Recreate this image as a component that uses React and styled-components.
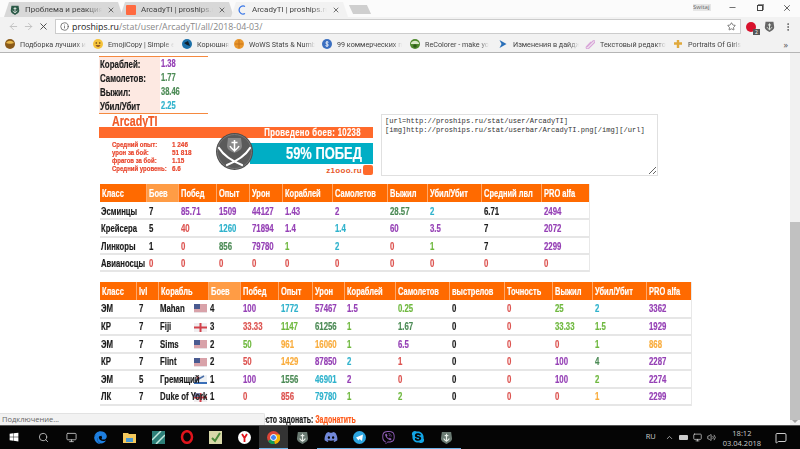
import React from 'react';
import styled, { createGlobalStyle } from 'styled-components';
import { FaWindows, FaEdge, FaViber, FaSkype, FaDiscord } from 'react-icons/fa';
import { ArrowLeft, ArrowRight, X, Info, Star, Minus, Search, ChevronUp, MessageSquare, Volume2, Monitor, MoreVertical } from 'lucide-react';

const Global = createGlobalStyle`
  html, body { margin: 0; padding: 0; width: 800px; height: 449px; overflow: hidden; background: #fff; }
  * { box-sizing: border-box; }
`;
const UI = `"Open Sans", "Noto Sans", sans-serif`;
const SMALL = `Roboto, "Noto Sans", sans-serif`;
const BOLD = `"Liberation Sans", Arial, sans-serif`;
const COLORS = { p: '#9540b5', r: '#dc5350', t: '#2fb2cc', g: '#55a84f', d: '#4b8a55', l: '#6fb83f', o: '#f9ac3c', k: '#1c1c1c' };

const Squeeze = styled.span`
  display: inline-block; white-space: nowrap; transform: scaleX(${p => p.$x ?? 0.71}); transform-origin: ${p => p.$o ?? 'left'} center;
  -webkit-text-stroke: .2px currentColor;
`;
const Window = styled.div`width: 800px; height: 449px; display: flex; flex-direction: column; overflow: hidden; font-family: ${UI};`;
const TabStrip = styled.div`height: 17px; background: #fbfbfb; display: flex; align-items: flex-end; padding-left: 4px; flex: none;`;
const Tab = styled.div`
  width: ${p => p.$w}px; height: 15px; margin-right: -3px; padding: 0 8px 0 6px; display: flex; align-items: center; gap: 5px;
  background: ${p => p.$active ? '#f2f2f2' : '#d8d8d8'}; color: #444; font: 400 8px ${SMALL}; white-space: nowrap;
  clip-path: polygon(0 100%, 5px 0, calc(100% - 5px) 0, 100% 100%);
`;
const TabTitle = styled.span`flex: 1; overflow: hidden; -webkit-mask-image: linear-gradient(90deg,#000 80%,transparent);`;
const NewTab = styled.div`width: 18px; height: 9px; margin: 0 0 3px 6px; background: #cfcfcf; transform: skewX(25deg);`;
const Controls = styled.div`margin-left: auto; display: flex; align-items: center; height: 17px; color: #444; padding-bottom: 2px;`;
const User = styled.span`font-size: 6px; width: 18px; color: #666; background: #e6e6e6; height: 7px; line-height: 7px; margin-right: 8px; overflow: hidden;`;
const Ctl = styled.span`width: 27px; display: flex; justify-content: center; align-items: center;`;
const Restore = styled.span`width: 6px; height: 6px; border: 1px solid #444; box-shadow: 1px -1px 0 0 #888;`;
const Toolbar = styled.div`height: 19px; background: #f2f2f2; display: flex; align-items: center; padding-left: 6px; flex: none; color: #555;`;
const NavBtn = styled.span`width: 15px; display: flex; justify-content: center; color: ${p => p.$on ? '#444' : '#c0c0c0'};`;
const Omni = styled.div`
  width: 686px; height: 15px; margin-left: 4px; background: #fff; border: 1px solid #ccc; display: flex; align-items: center; gap: 3px;
  padding: 0 4px; font-size: 8.8px; color: #888; white-space: nowrap;
`;
const Host = styled.span`color: #222;`;
const Path = styled.span`margin-left: -3px;`;
const OmniStar = styled.span`margin-left: auto; display: flex; color: #555;`;
const Ext = styled.div`display: flex; align-items: center; gap: 8px; margin-left: 5px;`;
const AdBadge = styled.span`position: relative; width: 10px; height: 10px; border-radius: 50%; background: #d8112c; display: block;`;
const AdCount = styled.span`position: absolute; right: -4px; bottom: -3px; width: 7px; height: 6px; background: #555; color: #fff; font-size: 5px; line-height: 6px; text-align: center;`;
const Bookmarks = styled.div`height: 17px; background: #f2f2f2; border-bottom: 1px solid #b5b5b5; display: flex; align-items: center; padding-left: 5px; flex: none; position: relative;`;
const Mark = styled.div`width: ${p => p.$w}px; display: flex; align-items: center; font: 400 7.2px ${SMALL}; color: #444; white-space: nowrap;`;
const MarkIconSvg = styled.svg`width: 10px; height: 10px; flex: none;`;
const TabFavicon = styled.span`width: 10px; height: 10px; flex: none; border-radius: 1px; background: #ff6a40;`;
const MarkText = styled.span`display: block; margin-left: 5px; max-width: 66px; overflow: hidden; -webkit-mask-image: linear-gradient(90deg,#000 85%,transparent);`;
const More = styled.span`position: absolute; right: 12px; top: 2px; font-size: 9px; color: #555;`;

const Body = styled.div`flex: 1; min-height: 0; display: flex; background: #fff;`;
const Content = styled.div`flex: 1; position: relative; overflow: hidden; padding: 3px 0 0 99px; font-family: ${BOLD}; font-weight: 700; font-size: 10px; color: #1c1c1c;`;
const Scrollbar = styled.div`
  width: 10px; background: #f1f1f1; display: flex; flex-direction: column; justify-content: flex-end; align-items: center;
  &::after { content: ''; width: 0; height: 0; margin-bottom: 2px; border: 3px solid transparent; border-top: 3px solid #a0a0a0; border-bottom: 0; }
`;
const Thumb = styled.div`height: 198px; width: 10px; background: #c1c1c1;`;
const Summary = styled.div`width: 109px; border-top: 1px solid #f5893f; border-bottom: 1px solid #f5893f;`;
const SummaryRow = styled.div`display: flex; height: 14px; line-height: 14px;`;
const SummaryLabel = styled.span`width: 61px; background: #fde9e2; font-size: 11px; padding-left: 1px;`;
const SummaryValue = styled.span`padding-left: 1px; color: ${p => COLORS[p.$c]};`;
const Profile = styled.div`display: flex; gap: 8px; align-items: flex-end;`;
const Userbar = styled.div`width: 274px;`;
const Nick = styled.div`height: 13px; padding-left: 13px; color: #ef5a26; font-size: 15px; line-height: 13px;`;
const Banner = styled.div`height: 49px; position: relative;`;
const BannerTop = styled.div`height: 11px; background: #ff6a2b; color: #fff; text-align: right; padding-right: 12px; line-height: 11px; font-size: 11px; letter-spacing: .5px;`;
const BannerBody = styled.div`display: flex; justify-content: space-between; padding-top: 5px;`;
const Facts = styled.div`padding: 0 0 0 13px; color: #e8452c; font-size: 7.5px; line-height: 8px; margin-top: -2px;`;
const Fact = styled.div`display: flex;`;
const FactLabel = styled.span`width: 60px;`;
const Promo = styled.div`width: 123px;`;
const WinBox = styled.div`height: 21px; background: #00aec5; color: #fff; font-size: 17px; line-height: 21px; text-align: right; padding-right: 11px;`;
const Site = styled.div`display: flex; justify-content: flex-end; align-items: center; gap: 1px; color: #e85a2c; font-size: 8px; letter-spacing: .3px; height: 12px;`;
const SiteIcon = styled.span`width: 10px; height: 10px; background: #ff6a2b; border-radius: 2px;`;
const Emblem = styled.svg`position: absolute; left: 117px; top: 6px;`;
const Code = styled.textarea`
  width: 277px; height: 62px; margin: 0; padding: 2px 3px; border: 1px solid #e0e0e0; font: 400 7.1px/9px "Liberation Mono", monospace; color: #333; overflow: hidden; outline: none; resize: both;
`;
const Table = styled.table`
  table-layout: fixed; border-collapse: collapse; width: ${p => p.$w}px; margin: ${p => p.$mt}px 0 0 1px; box-shadow: 1px 0 0 #e8e8e8;
  td { padding-top: ${p => p.$drop ?? 0}px; }
`;
const Th = styled.th`
  height: ${p => p.$h}px; padding: 0 0 0 2px; background: ${p => p.$hl ? '#ff9c45' : '#ff6a00'}; color: #fff; text-align: left; font-size: 11px; font-weight: 700; white-space: nowrap;
  border-left: 1px solid #ffa86a; &:first-child { border-left: 0; }
`;
const Td = styled.td`
  height: ${p => p.$h}px; padding: 0 0 0 ${p => p.$pl ?? 2.5}px; color: ${p => COLORS[p.$c] || '#1c1c1c'}; font-size: 11px; border-bottom: 2px solid #e6e6e6; white-space: nowrap; position: relative;
`;
const Flag = styled.svg`position: absolute; right: 1px; top: 4px;`;
const Donate = styled.div`margin: 8px 0 0 157px; font-size: 10px; line-height: 12px; white-space: nowrap;`;
const DonateLink = styled.span`color: #ff5a1a;`;
const StatusBubble = styled.div`position: absolute; left: 0; bottom: 0; width: 265px; height: 12px; background: #f2f2f2; border-top: 1px solid #e2e2e2; border-right: 1px solid #e2e2e2; border-radius: 0 2px 0 0; font: 400 7.5px/11px ${UI}; color: #666; padding-left: 2px;`;
const Taskbar = styled.div`height: 24px; flex: none; background: #050505; border-top: 1px solid #555; display: flex; align-items: center; color: #ddd;`;
const Slot = styled.div`
  width: 28.8px; height: 23px; display: flex; align-items: center; justify-content: center; flex: none;
  background: ${p => p.$active ? '#333' : 'transparent'}; border-bottom: 1px solid ${p => p.$open ? '#6fb4e8' : 'transparent'};
`;
const Tray = styled.div`margin-left: auto; display: flex; align-items: center; gap: 5px; font-size: 7.5px; color: #ccc; padding-right: 13px;`;
const Clock = styled.div`text-align: center; line-height: 10px; font-size: 7.5px; margin: 0 9px 0 2px;`;
const Lang = styled.span`margin-right: 4px; margin-top: -3px;`;
const Battery = styled.span`width: 9px; height: 5px; background: #ccc; border-radius: 1px;`;

const Shield = ({ size = 14, c = '#6a7a72', a = '#e8eee8' }) => (
  <svg width={size} height={size} viewBox="0 0 14 14"><path d="M2 1h10l1 7c0 3-3 4-6 6-3-2-6-3-6-6z" fill={c} /><path d="M7 3v8M5 5h4M4 8c1 2 2 2 3 3 1-1 2-1 3-3" stroke={a} strokeWidth="1.2" fill="none" /></svg>
);
const UsFlag = () => (
  <Flag width="13" height="9" viewBox="0 0 13 9"><rect width="13" height="9" fill="#e8e0e4" /><path d="M0 1h13M0 3h13M0 5h13M0 7h13" stroke="#c9646e" strokeWidth="1" /><rect width="6" height="5" fill="#4a5a90" /></Flag>
);
const UkFlag = ({ ensign }) => (
  <Flag width="13" height="9" viewBox="0 0 13 9"><rect width="13" height="9" fill="#f0eef0" /><path d="M6.5 0v9M0 4.5h13" stroke="#d2404a" strokeWidth="2" />{ensign && <rect width="6" height="4" fill="#7b7fa8" />}</Flag>
);
const SuFlag = () => (
  <Flag width="13" height="9" viewBox="0 0 13 9"><rect width="13" height="9" fill="#eef1f4" /><rect y="7" width="13" height="2" fill="#3a6fb8" /><path d="M1 6l9-5" stroke="#4a6fa8" strokeWidth="1.5" /><circle cx="4" cy="3" r="1.4" fill="#c45" /></Flag>
);
const flags = { us: <UsFlag />, uk: <UkFlag />, en: <UkFlag ensign />, su: <SuFlag /> };

const T1_COLS = [46, 32, 38, 33, 33, 50, 55, 40, 54, 60, 48];
const T1_HEAD = ['Класс', 'Боев', 'Побед', 'Опыт', 'Урон', 'Кораблей', 'Самолетов', 'Выжил', 'Убил/Убит', 'Средний лвл', 'PRO alfa'];
const T1 = [
  ['Эсминцы', '7 k', '85.71 p', '1509 p', '44127 p', '1.43 p', '2 p', '28.57 d', '2 t', '6.71 k', '2494 p'],
  ['Крейсера', '5 k', '40 r', '1260 t', '71894 p', '1.4 p', '1.4 t', '60 p', '3.5 p', '7 k', '2072 p'],
  ['Линкоры', '1 k', '0 r', '856 d', '79780 p', '1 l', '2 t', '0 r', '1 l', '7 k', '2299 p'],
  ['Авианосцы', '0 r', '0 r', '0 r', '0 r', '0 r', '0 r', '0 r', '0 r', '0 r', '0 r'],
];
const T2_COLS = [36, 22, 50, 32, 38, 34, 32, 51, 54, 55, 48, 40, 54, 45];
const T2_HEAD = ['Класс', 'lvl', 'Корабль', 'Боев', 'Побед', 'Опыт', 'Урон', 'Кораблей', 'Самолетов', 'выстрелов', 'Точность', 'Выжил', 'Убил/Убит', 'PRO alfa'];
const T2 = [
  ['ЭМ', '7', 'Mahan', 'us', '4', '100 p', '1772 t', '57467 p', '1.5 p', '0.25 l', '0 k', '0 r', '25 l', '2 t', '3362 p'],
  ['КР', '7', 'Fiji', 'uk', '3', '33.33 r', '1147 l', '61256 d', '1 l', '1.67 d', '0 k', '0 r', '33.33 l', '1.5 l', '1929 p'],
  ['ЭМ', '7', 'Sims', 'us', '2', '50 l', '961 o', '16060 o', '1 l', '6.5 p', '0 k', '0 r', '0 r', '1 l', '868 o'],
  ['КР', '7', 'Flint', 'us', '2', '50 r', '1429 o', '87850 p', '2 t', '1 r', '0 k', '0 r', '100 p', '4 d', '2287 p'],
  ['ЭМ', '5', 'Гремящий', 'su', '1', '100 p', '1556 d', '46901 t', '2 p', '0 r', '0 k', '0 r', '100 p', '2 l', '2274 p'],
  ['ЛК', '7', 'Duke of York', 'en', '1', '0 r', '856 r', '79780 t', '1 l', '2 l', '0 k', '0 r', '0 r', '1 o', '2299 p'],
];
const Cell = ({ v, h }) => { const [t, c] = v.split(' '); return <Td $h={h} $c={c}><Squeeze>{t}</Squeeze></Td>; };

const MARK_ICONS = [
  <><circle cx="5" cy="5" r="5" fill="#8a5a1a" /><path d="M1 4c2-3 6-3 8 0-2 1-6 1-8 0z" fill="#e8b84a" /></>,
  <><circle cx="5" cy="5" r="5" fill="#f5c33b" /><circle cx="3.300" cy="4" r=".8" fill="#5a3a10" /><circle cx="6.700" cy="4" r=".8" fill="#5a3a10" /><path d="M2.500 6.200c1.500 2 3.500 2 5 0z" fill="#7a3a20" /></>,
  <><circle cx="5" cy="5" r="5" fill="#1b6fa8" /><path d="M2 4l4-2 2 5-3-1z" fill="#12202c" /></>,
  <><circle cx="5" cy="5" r="5" fill="#e8962c" /><path d="M1 5h8M5 1v8" stroke="#c8741a" strokeWidth="1" /></>,
  <><circle cx="5" cy="5" r="5" fill="#3b6fc0" /><path d="M6.500 3.300C5.500 2.500 3.600 2.900 3.800 4.100 4 5.200 6.300 4.800 6.400 6c.1 1.200-2 1.400-3 .6M5 2v6" stroke="#fff" strokeWidth=".8" fill="none" /></>,
  <><circle cx="5" cy="5" r="5" fill="#4f8a2e" /><path d="M1 4c2-3 6-3 8 0v1H1z" fill="#d9e8c8" /><circle cx="5" cy="7" r="1.800" fill="#2f5a1a" /></>,
  <path d="M1.500 1l7 4-7 4 2-4z" fill="#2a6fb8" />,
  <path d="M2 8l6-6c1.500-1 2.500 .5 1.500 1.500L3.500 9.500C2 10.500 .5 9 1.500 7.500L6 3" fill="none" stroke="#d9a6d9" strokeWidth="1.100" />,
  <path d="M5 1v8M1 4.500h8" stroke="#e0a93c" strokeWidth="2.400" />,
];
const MARKS = [
  [88, 'Подборка лучших и'], [89, 'EmojiCopy | Simple e'], [52, 'Корюшня'], [88, 'WoWS Stats & Numb'],
  [88, '99 коммерческих п'], [88, 'ReColorer - make yo'], [87, 'Изменения в дайдж'], [88, 'Текстовый редактор'], [88, 'Portraits Of Girls'],
];
const SUMMARY = [['Кораблей:', '1.38', 'p'], ['Самолетов:', '1.77', 'd'], ['Выжил:', '38.46', 'd'], ['Убил/Убит', '2.25', 't']];
const FACTS = [['Средний опыт:', '1 246'], ['урон за бой:', '51 818'], ['фрагов за бой:', '1.15'], ['Средний уровень:', '6.6']];

const Emb = () => (
  <Emblem width="37" height="37" viewBox="0 0 37 37">
    <circle cx="18.5" cy="18.5" r="18.5" fill="#4d4d4d" />
    <circle cx="18.5" cy="18.5" r="17" fill="#5a5a5a" stroke="#777" strokeWidth="1" />
    <path d="M12 5h13l1 8c0 4-4 5-7.500 7-3.500-2-7.500-3-7.500-7z" fill="#888" />
    <path d="M18.500 7v11M15.500 9.500h6M14 13c1 2 2.500 3 4.500 5 2-2 3.500-3 4.500-5" stroke="#fff" strokeWidth="1.500" fill="none" />
    <path d="M3 15c5 8 13 13 23 17M34 15c-5 8-13 13-23 17" stroke="#fff" strokeWidth="2.200" fill="none" strokeLinecap="round" />
  </Emblem>
);

export default function App() {
  return (
    <Window>
      <Global />
      <TabStrip>
        <Tab $w={119}><Shield size={10} c="#2c5a48" /><TabTitle>Проблема и реакция на</TabTitle><X size={8} color="#333" /></Tab>
        <Tab $w={114}><TabFavicon /><TabTitle>ArcadyTI | proships.ru ста</TabTitle><X size={8} color="#333" /></Tab>
        <Tab $w={117} $active><svg width="10" height="10" viewBox="0 0 10 10" style={{ flex: 'none' }}><path d="M8 1.500A4 4 0 1 0 8 8.500" fill="none" stroke="#3b78e7" strokeWidth="1.300" /></svg><TabTitle>ArcadyTI | proships.ru ста</TabTitle><X size={8} color="#333" /></Tab>
        <NewTab />
        <Controls>
          <User>Switaj</User>
          <Ctl><Minus size={9} /></Ctl>
          <Ctl><Restore /></Ctl>
          <Ctl><X size={10} /></Ctl>
        </Controls>
      </TabStrip>
      <Toolbar>
        <NavBtn><ArrowLeft size={11} /></NavBtn>
        <NavBtn><ArrowRight size={11} /></NavBtn>
        <NavBtn $on><X size={11} /></NavBtn>
        <Omni>
          <Info size={9} color="#555" />
          <Host>proships.ru</Host><Path>/stat/user/ArcadyTI/all/2018-04-03/</Path>
          <OmniStar><Star size={9} /></OmniStar>
        </Omni>
        <Ext>
          <AdBadge><AdCount>2</AdCount></AdBadge>
          <Shield size={11} c="#666" />
          <MoreVertical size={10} color="#555" />
        </Ext>
      </Toolbar>
      <Bookmarks>
        {MARKS.map(([w, t], i) => <Mark key={t} $w={w}><MarkIconSvg viewBox="0 0 10 10">{MARK_ICONS[i]}</MarkIconSvg><MarkText>{t}</MarkText></Mark>)}
        <More>»</More>
      </Bookmarks>
      <Body>
        <Content>
          <Summary>
            {SUMMARY.map(([l, v, c]) => (
              <SummaryRow key={l}><SummaryLabel><Squeeze $x={0.72}>{l}</Squeeze></SummaryLabel><SummaryValue $c={c}><Squeeze $x={0.75}>{v}</Squeeze></SummaryValue></SummaryRow>
            ))}
          </Summary>
          <Profile>
            <Userbar>
              <Nick><Squeeze $x={0.71}>ArcadyTI</Squeeze></Nick>
              <Banner>
                <BannerTop><Squeeze $x={0.7} $o="right">Проведено боев: 10238</Squeeze></BannerTop>
                <BannerBody>
                  <Facts>
                    {FACTS.map(([l, v]) => <Fact key={l}><FactLabel><Squeeze $x={0.8}>{l}</Squeeze></FactLabel><Squeeze $x={0.85}>{v}</Squeeze></Fact>)}
                  </Facts>
                  <Promo>
                    <WinBox><Squeeze $x={0.76} $o="right">59% ПОБЕД</Squeeze></WinBox>
                    <Site>z1ooo.ru<SiteIcon /></Site>
                  </Promo>
                </BannerBody>
                <Emb />
              </Banner>
            </Userbar>
            <Code readOnly defaultValue={'[url=http://proships.ru/stat/user/ArcadyTI]\n[img]http://proships.ru/stat/userbar/ArcadyTI.png[/img][/url]'} />
          </Profile>
          <Table $w={489} $mt={8} $drop={1}>
            <colgroup>{T1_COLS.map((w, i) => <col key={i} width={w} />)}</colgroup>
            <thead><tr>{T1_HEAD.map((h, i) => <Th key={h} $h={18} $hl={i === 1}><Squeeze $x={0.68}>{h}</Squeeze></Th>)}</tr></thead>
            <tbody>{T1.map(r => <tr key={r[0]}><Td $h={17.3} $pl={1}><Squeeze $x={0.7}>{r[0]}</Squeeze></Td>{r.slice(1).map((v, i) => <Cell key={i} v={v} h={17.3} />)}</tr>)}</tbody>
          </Table>
          <Table $w={591} $mt={10}>
            <colgroup>{T2_COLS.map((w, i) => <col key={i} width={w} />)}</colgroup>
            <thead><tr>{T2_HEAD.map((h, i) => <Th key={h} $h={18} $hl={i === 3}><Squeeze $x={0.68}>{h}</Squeeze></Th>)}</tr></thead>
            <tbody>{T2.map(r => (
              <tr key={r[2]}>
                <Td $h={17.5} $pl={1}><Squeeze>{r[0]}</Squeeze></Td><Td $h={17.5}><Squeeze>{r[1]}</Squeeze></Td>
                <Td $h={17.5} $pl={2}>{flags[r[3]]}<Squeeze>{r[2]}</Squeeze></Td><Td $h={17.5} $pl={2}><Squeeze>{r[4]}</Squeeze></Td>
                {r.slice(5).map((v, i) => <Cell key={i} v={v} h={17.5} />)}
              </tr>
            ))}</tbody>
          </Table>
          <Donate><Squeeze $x={0.7}>Место задонать: <DonateLink>Задонатить</DonateLink></Squeeze></Donate>
          <StatusBubble>Подключение...</StatusBubble>
        </Content>
        <Scrollbar><Thumb /></Scrollbar>
      </Body>
      <Taskbar>
        <Slot><FaWindows size={10} color="#fff" /></Slot>
        <Slot><Search size={11} color="#bbb" /></Slot>
        <Slot><Monitor size={11} color="#bbb" /></Slot>
        <Slot><FaEdge size={13} color="#1e7fe0" /></Slot>
        <Slot><svg width="13" height="11" viewBox="0 0 13 11"><path d="M0 1h5l1 1h7v9H0z" fill="#f4c95d" /><rect x="3" y="6" width="7" height="4" fill="#4a9ad4" /></svg></Slot>
        <Slot><svg width="13" height="13" viewBox="0 0 13 13"><rect width="13" height="13" fill="#2d7f78" /><path d="M0 9L9 0M4 13L13 4" stroke="#bfe6dd" strokeWidth="1.500" /></svg></Slot>
        <Slot><svg width="14" height="14" viewBox="0 0 14 14"><ellipse cx="7" cy="7" rx="5" ry="5.800" fill="none" stroke="#e0141c" strokeWidth="2.500" /></svg></Slot>
        <Slot><svg width="13" height="13" viewBox="0 0 13 13"><rect width="13" height="13" fill="#d8d8a8" /><path d="M3 7l3 3 5-8" stroke="#4a8a3a" strokeWidth="2" fill="none" /></svg></Slot>
        <Slot><svg width="13" height="13" viewBox="0 0 13 13"><circle cx="6.500" cy="6.500" r="6.500" fill="#fff" /><path d="M4 3l2.500 4v4M9 3L6.500 7" stroke="#e0141c" strokeWidth="1.800" fill="none" /></svg></Slot>
        <Slot $active $open><svg width="13" height="13" viewBox="0 0 13 13"><circle cx="6.500" cy="6.500" r="6.500" fill="#db4437" /><path d="M6.500 6.500L1 10A6.500 6.500 0 0 0 8 13z" fill="#0f9d58" /><path d="M6.500 3.500h6A6.500 6.500 0 0 1 8 13z" fill="#f4b400" /><circle cx="6.500" cy="6.500" r="3" fill="#4285f4" stroke="#fff" /></svg></Slot>
        <Slot><Shield size={13} /></Slot>
        <Slot $open><FaDiscord size={14} color="#7289da" /></Slot>
        <Slot $open><svg width="13" height="13" viewBox="0 0 13 13"><circle cx="6.500" cy="6.500" r="6.500" fill="#2ca5e0" /><path d="M3 6.500l7-3-1 6.500-2.500-2-1 1.500z" fill="#fff" /></svg></Slot>
        <Slot $open><FaViber size={13} color="#8f5db7" /></Slot>
        <Slot $open><FaSkype size={14} color="#12a5e6" /></Slot>
        <Slot $open><Shield size={13} /></Slot>
        <Tray>
          <Lang>RU</Lang>
          <ChevronUp size={9} />
          <Battery />
          <Monitor size={9} />
          <Volume2 size={9} />
          <Clock>18:12<br />03.04.2018</Clock>
          <MessageSquare size={12} />
        </Tray>
      </Taskbar>
    </Window>
  );
}
